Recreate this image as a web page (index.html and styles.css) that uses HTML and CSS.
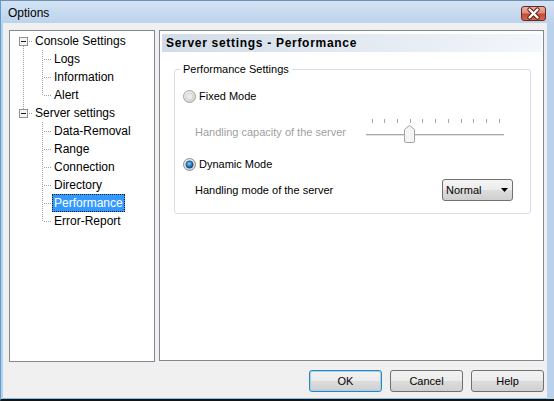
FILE: index.html
```html
<!DOCTYPE html>
<html>
<head>
<meta charset="utf-8">
<title>Options</title>
<link rel="stylesheet" href="styles.css">
</head>
<body>
<div class="window">
  <div class="titlebar">
    <span class="title">Options</span>
    <div class="close">
      <svg width="25" height="15" viewBox="0 0 25 15">
        <path d="M8.5 3.5 L16.5 11.5 M16.5 3.5 L8.5 11.5" stroke="#5b1f14" stroke-width="4.4" stroke-linecap="round"/>
        <path d="M8.5 3.5 L16.5 11.5 M16.5 3.5 L8.5 11.5" stroke="#ffffff" stroke-width="2.4" stroke-linecap="round"/>
      </svg>
    </div>
  </div>
  <div class="client">
    <div class="main">
      <div class="tree">
        <div class="row">
          <svg class="gut-root" width="23" height="18" viewBox="0 0 23 18">
            <line class="dot" x1="13.5" y1="14" x2="13.5" y2="18"/>
            <line class="dot" x1="19" y1="9.5" x2="23" y2="9.5"/>
            <rect x="9.5" y="5.5" width="8" height="8" class="pm"/>
            <line x1="11" y1="9.5" x2="16" y2="9.5" class="minus"/>
          </svg>
          <span class="label">Console Settings</span>
        </div>
        <div class="row">
          <svg class="gut-child" width="42" height="18" viewBox="0 0 42 18">
            <line class="dot" x1="13.5" y1="0" x2="13.5" y2="18"/>
            <line class="dot" x1="32.5" y1="0" x2="32.5" y2="18"/>
            <line class="dot" x1="34" y1="9.5" x2="42" y2="9.5"/>
          </svg>
          <span class="label">Logs</span>
        </div>
        <div class="row">
          <svg class="gut-child" width="42" height="18" viewBox="0 0 42 18">
            <line class="dot" x1="13.5" y1="0" x2="13.5" y2="18"/>
            <line class="dot" x1="32.5" y1="0" x2="32.5" y2="18"/>
            <line class="dot" x1="34" y1="9.5" x2="42" y2="9.5"/>
          </svg>
          <span class="label">Information</span>
        </div>
        <div class="row">
          <svg class="gut-child" width="42" height="18" viewBox="0 0 42 18">
            <line class="dot" x1="13.5" y1="0" x2="13.5" y2="18"/>
            <line class="dot" x1="32.5" y1="0" x2="32.5" y2="10"/>
            <line class="dot" x1="34" y1="9.5" x2="42" y2="9.5"/>
          </svg>
          <span class="label">Alert</span>
        </div>
        <div class="row">
          <svg class="gut-root" width="23" height="18" viewBox="0 0 23 18">
            <line class="dot" x1="13.5" y1="0" x2="13.5" y2="5"/>
            <line class="dot" x1="19" y1="9.5" x2="23" y2="9.5"/>
            <rect x="9.5" y="5.5" width="8" height="8" class="pm"/>
            <line x1="11" y1="9.5" x2="16" y2="9.5" class="minus"/>
          </svg>
          <span class="label">Server settings</span>
        </div>
        <div class="row">
          <svg class="gut-child" width="42" height="18" viewBox="0 0 42 18">
            <line class="dot" x1="32.5" y1="0" x2="32.5" y2="18"/>
            <line class="dot" x1="34" y1="9.5" x2="42" y2="9.5"/>
          </svg>
          <span class="label">Data-Removal</span>
        </div>
        <div class="row">
          <svg class="gut-child" width="42" height="18" viewBox="0 0 42 18">
            <line class="dot" x1="32.5" y1="0" x2="32.5" y2="18"/>
            <line class="dot" x1="34" y1="9.5" x2="42" y2="9.5"/>
          </svg>
          <span class="label">Range</span>
        </div>
        <div class="row">
          <svg class="gut-child" width="42" height="18" viewBox="0 0 42 18">
            <line class="dot" x1="32.5" y1="0" x2="32.5" y2="18"/>
            <line class="dot" x1="34" y1="9.5" x2="42" y2="9.5"/>
          </svg>
          <span class="label">Connection</span>
        </div>
        <div class="row">
          <svg class="gut-child" width="42" height="18" viewBox="0 0 42 18">
            <line class="dot" x1="32.5" y1="0" x2="32.5" y2="18"/>
            <line class="dot" x1="34" y1="9.5" x2="42" y2="9.5"/>
          </svg>
          <span class="label">Directory</span>
        </div>
        <div class="row">
          <svg class="gut-child" width="42" height="18" viewBox="0 0 42 18">
            <line class="dot" x1="32.5" y1="0" x2="32.5" y2="18"/>
            <line class="dot" x1="34" y1="9.5" x2="42" y2="9.5"/>
          </svg>
          <span class="label selected">Performance</span>
        </div>
        <div class="row">
          <svg class="gut-child" width="42" height="18" viewBox="0 0 42 18">
            <line class="dot" x1="32.5" y1="0" x2="32.5" y2="10"/>
            <line class="dot" x1="34" y1="9.5" x2="42" y2="9.5"/>
          </svg>
          <span class="label">Error-Report</span>
        </div>
      </div>

      <div class="panel">
        <div class="panel-header">Server settings - Performance</div>
        <fieldset class="group">
          <legend>Performance Settings</legend>
          <div class="group-body">
            <div class="radio-row first">
              <svg class="radio" width="13" height="13" viewBox="0 0 13 13">
                <defs>
                  <radialGradient id="rgOff" cx="0.4" cy="0.35" r="0.7">
                    <stop offset="0" stop-color="#ffffff"/>
                    <stop offset="1" stop-color="#cfcfcf"/>
                  </radialGradient>
                </defs>
                <circle cx="6.5" cy="6.5" r="6" fill="url(#rgOff)" stroke="#a3a3a3"/>
                <circle cx="6.5" cy="6.5" r="3.6" fill="#e9e9e9" stroke="#cdcdcd" stroke-width="0.8"/>
              </svg>
              <span class="text">Fixed Mode</span>
            </div>
            <div class="cap-row">
              <span class="cap-label">Handling capacity of the server</span>
              <svg class="slider" width="140" height="26" viewBox="0 0 140 26">
                <g fill="#a8a8a8">
                  <rect x="7" y="1" width="1" height="4"/>
                  <rect x="19" y="1" width="1" height="4"/>
                  <rect x="32" y="1" width="1" height="4"/>
                  <rect x="45" y="1" width="1" height="4"/>
                  <rect x="57" y="1" width="1" height="4"/>
                  <rect x="70" y="1" width="1" height="4"/>
                  <rect x="83" y="1" width="1" height="4"/>
                  <rect x="96" y="1" width="1" height="4"/>
                  <rect x="108" y="1" width="1" height="4"/>
                  <rect x="121" y="1" width="1" height="4"/>
                  <rect x="134" y="1" width="1" height="4"/>
                </g>
                <rect x="1" y="16" width="138" height="1" fill="#a9a9a9"/>
                <rect x="1" y="17" width="138" height="1" fill="#e2e2e2"/>
                <path d="M39.5 11.5 L44.5 7.5 L49.5 11.5 L49.5 23 Q49.5 24.5 48 24.5 L41 24.5 Q39.5 24.5 39.5 23 Z" fill="#f5f5f5" stroke="#a4a4a4"/>
              </svg>
            </div>
            <div class="radio-row">
              <svg class="radio" width="13" height="13" viewBox="0 0 13 13">
                <defs>
                  <radialGradient id="rgOn" cx="0.4" cy="0.35" r="0.7">
                    <stop offset="0" stop-color="#ffffff"/>
                    <stop offset="1" stop-color="#cfcfcf"/>
                  </radialGradient>
                  <radialGradient id="rgDot" cx="0.45" cy="0.4" r="0.6">
                    <stop offset="0" stop-color="#7fd0f7"/>
                    <stop offset="0.55" stop-color="#2b82c2"/>
                    <stop offset="1" stop-color="#123f6e"/>
                  </radialGradient>
                </defs>
                <circle cx="6.5" cy="6.5" r="6" fill="url(#rgOn)" stroke="#8e8f8f"/>
                <circle cx="6.5" cy="6.5" r="3.7" fill="url(#rgDot)" stroke="#1c4f7e" stroke-width="0.6"/>
              </svg>
              <span class="text">Dynamic Mode</span>
            </div>
            <div class="mode-row">
              <span class="mode-label">Handling mode of the server</span>
              <div class="select">
                <span>Normal</span>
                <svg width="7" height="4" viewBox="0 0 7 4"><polygon points="0,0 7,0 3.5,4" fill="#000"/></svg>
              </div>
            </div>
          </div>
        </fieldset>
      </div>
    </div>
    <div class="buttons">
      <button class="btn default">OK</button>
      <button class="btn">Cancel</button>
      <button class="btn">Help</button>
    </div>
  </div>
</div>
</body>
</html>
```

FILE: styles.css
```css
html, body {
  margin: 0;
  padding: 0;
  background: #b9d1ea;
}

.window {
  width: 554px;
  height: 401px;
  box-sizing: border-box;
  display: flex;
  flex-direction: column;
  background: #b9d1ea;
  border-top: 1px solid #6f90b2;
  border-left: 1px solid #5a9fd2;
  border-bottom: 2px solid #141414;
  font-family: "Liberation Sans", Arial, sans-serif;
  color: #000;
}

.titlebar {
  flex: none;
  height: 22px;
  box-sizing: border-box;
  padding: 4px 8px 0 7px;
  display: flex;
  justify-content: space-between;
  align-items: flex-start;
  background: linear-gradient(#d3e3f4, #bcd3eb);
}

.title {
  font-size: 12px;
  line-height: 16px;
}

.close {
  width: 25px;
  height: 15px;
  box-sizing: border-box;
  margin-top: 1px;
  border: 1px solid #6a2a1e;
  border-radius: 3px;
  background: linear-gradient(#eab1a4 0%, #dc8e7e 45%, #c84a33 55%, #d2694f 100%);
  display: flex;
  align-items: center;
  justify-content: center;
}

.close svg {
  display: block;
  margin: -1px;
}

.client {
  flex: 1;
  margin: 0 7px 1px 2px;
  background: #f0f0f0;
  padding: 7px 3px 0 6px;
  box-shadow: 0 1px 0 #7cc0ea;
}

.main {
  display: flex;
  gap: 4px;
  align-items: flex-start;
}

/* Tree */
.tree {
  width: 146px;
  height: 332px;
  box-sizing: border-box;
  border: 1px solid #828790;
  background: #fff;
  padding-top: 1px;
}

.row {
  display: flex;
  height: 18px;
  align-items: stretch;
  font-size: 12px;
}

.row svg {
  display: block;
  flex: none;
}

.dot {
  stroke: #a0a0a0;
  stroke-width: 1;
  stroke-dasharray: 1 1;
  shape-rendering: crispEdges;
}

.pm {
  fill: #f4f4f4;
  stroke: #919191;
  shape-rendering: crispEdges;
}

.minus {
  stroke: #1a1a1a;
  stroke-width: 1;
  shape-rendering: crispEdges;
}

.label {
  padding: 0 2px;
  line-height: 18px;
  white-space: nowrap;
}

.label.selected {
  background: #3399ff;
  color: #fff;
  outline: 1px dotted #1c1c1c;
  outline-offset: -1px;
}

/* Right panel */
.panel {
  width: 385px;
  height: 331px;
  box-sizing: border-box;
  border: 1px solid #828790;
  background: #fff;
  padding: 3px 1px 0 2px;
}

.panel-header {
  height: 18px;
  line-height: 18px;
  padding-left: 4px;
  font-size: 12px;
  font-weight: bold;
  letter-spacing: 0.7px;
  background: linear-gradient(to right, #d2dce8, #f3f6fa);
  white-space: nowrap;
}

.group {
  margin: 11px 11px 0 12px;
  padding: 0 0 12px 5px;
  border: 1px solid #d5dfe5;
  border-radius: 3px;
  min-width: 0;
  font-size: 11px;
}

.group legend {
  padding: 0 3px;
  line-height: 13px;
  font-size: 11px;
}

.group-body {
  padding-left: 3px;
}

.radio-row {
  display: flex;
  align-items: center;
  height: 16px;
  margin-top: 12px;
}

.radio {
  display: block;
  flex: none;
  margin-right: 3px;
}

.text {
  line-height: 13px;
}

.cap-row {
  display: flex;
  align-items: center;
  height: 26px;
  margin-top: 14px;
}

.cap-label {
  width: 182px;
  box-sizing: border-box;
  padding-left: 12px;
  padding-top: 2px;
  color: #a0a0a0;
  line-height: 13px;
  white-space: nowrap;
}

.slider {
  display: block;
  flex: none;
}

.mode-row {
  display: flex;
  align-items: center;
  height: 22px;
  margin-top: 7px;
}

.mode-label {
  width: 259px;
  box-sizing: border-box;
  padding-left: 12px;
  line-height: 13px;
  white-space: nowrap;
}

.select {
  width: 71px;
  height: 22px;
  box-sizing: border-box;
  border: 1px solid #707070;
  border-radius: 3px;
  background: linear-gradient(#f4f4f4 0%, #ebebeb 50%, #dddddd 50%, #cfcfcf 100%);
  display: flex;
  align-items: center;
  justify-content: space-between;
  padding: 0 4px 0 3px;
  font-size: 11px;
}

.select svg {
  display: block;
}

/* Buttons */
.buttons {
  display: flex;
  justify-content: flex-end;
  gap: 8px;
  margin-top: 8px;
}

.btn {
  width: 73px;
  height: 22px;
  box-sizing: border-box;
  padding: 0;
  border: 1px solid #707070;
  border-radius: 3px;
  background: linear-gradient(#f2f2f2 0%, #ebebeb 50%, #dddddd 50%, #cfcfcf 100%);
  font-family: "Liberation Sans", Arial, sans-serif;
  font-size: 11px;
  color: #000;
}

.btn.default {
  border-color: #3c7fb1;
  box-shadow: inset 0 0 0 1px #8fd8f8;
}
```
